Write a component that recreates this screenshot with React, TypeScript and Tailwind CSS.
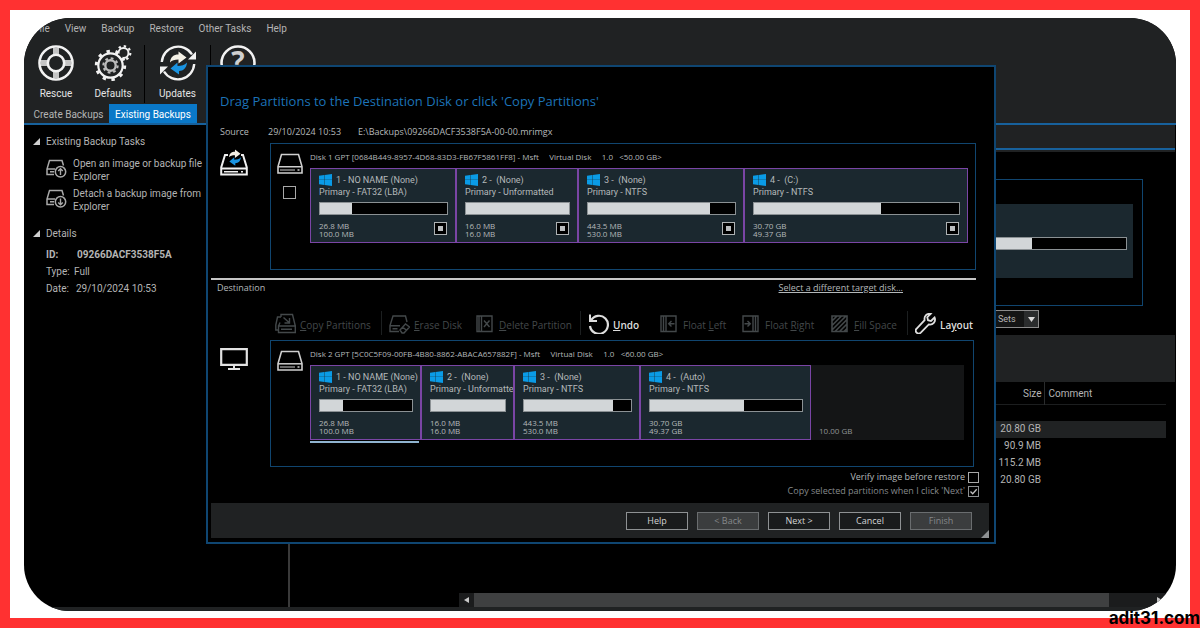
import type { ReactNode } from 'react';
import { clsx } from 'clsx';

type Partition = {
  title: string;
  kind: string;
  used: string;
  total: string;
  fill: number;
};

const sourceParts: Partition[] = [
  { title: '1 - NO NAME (None)', kind: 'Primary - FAT32 (LBA)', used: '26.8 MB', total: '100.0 MB', fill: 25 },
  { title: '2 -  (None)', kind: 'Primary - Unformatted', used: '16.0 MB', total: '16.0 MB', fill: 100 },
  { title: '3 -  (None)', kind: 'Primary - NTFS', used: '443.5 MB', total: '530.0 MB', fill: 83 },
  { title: '4 -  (C:)', kind: 'Primary - NTFS', used: '30.70 GB', total: '49.37 GB', fill: 62 },
];

const targetParts: Partition[] = [
  ...sourceParts.slice(0, 3),
  { ...sourceParts[3], title: '4 -  (Auto)' },
];

const rows = ['20.80 GB', '90.9 MB', '115.2 MB', '20.80 GB'];

/* ---------- icons ---------- */

function RescueIcon() {
  return (
    <svg viewBox="0 0 36 36" className="size-9" fill="none" aria-hidden="true">
      <path d="M18 3v8M18 25v8M3 18h8M25 18h8" stroke="#c4c4c4" strokeWidth="6" />
      <circle cx="18" cy="18" r="16.5" stroke="#f2f2f2" strokeWidth="2.6" />
      <circle cx="18" cy="18" r="8.2" stroke="#f2f2f2" strokeWidth="2.6" />
    </svg>
  );
}

function DefaultsIcon() {
  return (
    <svg viewBox="0 0 38 36" className="h-9 w-[38px]" fill="none" aria-hidden="true">
      <circle cx="29.500" cy="8" r="6.800" stroke="#f2f2f2" strokeWidth="2.200" strokeDasharray="2.400 2.940" />
      <circle cx="29.500" cy="8" r="5" stroke="#f2f2f2" strokeWidth="2" />
      <circle cx="16.500" cy="20.500" r="15" fill="#202223" />
      <circle cx="16.500" cy="20.500" r="14.200" stroke="#f2f2f2" strokeWidth="3" strokeDasharray="3.400 5.520" />
      <circle cx="16.500" cy="20.500" r="12.200" stroke="#f2f2f2" strokeWidth="2.200" />
      <circle cx="16.500" cy="20.500" r="7.200" stroke="#bdbdbd" strokeWidth="2" strokeDasharray="2.800 2.850" />
      <circle cx="16.500" cy="20.500" r="5.200" stroke="#bdbdbd" strokeWidth="2.400" />
    </svg>
  );
}

function SwapArrows() {
  return (
    <>
      <path d="M10 17.500C10.500 12 13.500 9.500 18.500 9.500V6.500l8 6-8 6v-4c-4 0-6.500.8-8.500 3z" fill="#f5f1e6" />
      <path d="M27 17.500c-.5 5.500-3.500 8.500-8 8.500v3.500l-8.500-6 7-6V21c4 0 7-.8 9.500-3.500z" fill="#1a93e0" />
    </>
  );
}

function UpdatesIcon() {
  return (
    <svg viewBox="0 0 36 36" className="size-9" fill="none" aria-hidden="true">
      <path d="M1.800 17A16.300 16.300 0 0 1 32 9.500M34.200 19A16.300 16.300 0 0 1 4 26.500" stroke="#f2f2f2" strokeWidth="2.400" />
      <path d="M36 6.500v8h-8z" fill="#f2f2f2" />
      <path d="M0 29.500v-8h8z" fill="#f2f2f2" />
      <SwapArrows />
    </svg>
  );
}

function HelpIcon() {
  return (
    <svg viewBox="0 0 36 36" className="size-9" aria-hidden="true">
      <circle cx="18" cy="18" r="16.500" fill="none" stroke="#f2f2f2" strokeWidth="2.600" />
      <text x="18" y="27" textAnchor="middle" fontSize="28" fontWeight="700" fontFamily="Open Sans, sans-serif" fill="#cfcfcf">?</text>
    </svg>
  );
}

function DriveIcon({ badge }: { badge: 'up' | 'down' }) {
  return (
    <svg viewBox="0 0 21 19" className="h-[19px] w-[21px]" fill="none" stroke="#a9a9a9" strokeWidth="1.500" aria-hidden="true">
      <path d="M17.500 6.500 16 1.500H3.500L1 10v5.500h7M1 10h8" />
      <path d="M4 12.700h4" />
      <circle cx="14.500" cy="12.800" r="5.200" />
      <path d={badge === 'up' ? 'M14.500 16v-6M12.200 12l2.300-2.300 2.300 2.300' : 'M14.500 9.600v6M12.200 13.500l2.300 2.300 2.300-2.300'} strokeWidth="1.400" />
    </svg>
  );
}

function DiskIcon() {
  return (
    <svg viewBox="0 0 26 21" className="h-[21px] w-[26px]" fill="none" stroke="#cfcfcf" aria-hidden="true">
      <path d="M4.500 1.500h17L25 13.500v6.500H1v-6.500z" strokeWidth="1.600" />
      <path d="M1 13.800h24" strokeWidth="1.500" />
      <path d="M3 17h15" strokeWidth="1" />
      <path d="M20.500 17h2" strokeWidth="1.500" />
    </svg>
  );
}

function RestoreDiskIcon() {
  return (
    <svg viewBox="0 0 28 27" className="h-[27px] w-7" fill="none" aria-hidden="true">
      <path d="M8 6H5L1.200 18.500v7h25.600v-7L23 6h-2" stroke="#f0f0f0" strokeWidth="2" />
      <path d="M1 19.500h26" stroke="#f0f0f0" strokeWidth="2" />
      <path d="M4 22.700h14M21 22.700h2" stroke="#f0f0f0" strokeWidth="1.400" />
      <g transform="translate(2 -4) scale(0.700)">
        <SwapArrows />
      </g>
    </svg>
  );
}

function MonitorIcon() {
  return (
    <svg viewBox="0 0 28 22" className="h-[22px] w-7" fill="none" stroke="#e2e2e2" aria-hidden="true">
      <path d="M1.200 1.200h25.600v15.600H1.200z" strokeWidth="2.200" />
      <path d="M14 17v3M8 21h12" strokeWidth="2" />
    </svg>
  );
}

function WindowsLogo() {
  return (
    <svg viewBox="0 0 13 12" className="h-3 w-[13px] shrink-0" fill="#0a9be6" aria-hidden="true">
      <path d="M0 1.700 5.300 1v4.700H0zM5.700.9 13 0v5.700H5.700zM0 6.100h5.300V11L0 10.300zM5.700 6.100H13V12l-7.300-.9z" />
    </svg>
  );
}

const toolIcons: Record<string, ReactNode> = {
  copy: (
    <>
      <path d="M6 4V1.500h11.500L20.300 13M3.500 13h16.800v6.500H3.500zM3.500 13 5 9.500" />
      <path d="M6 16.300h11M3.500 17H.8v-5L2.500 4H6M8.500 4.500l5.500 5M14.500 5v5H9.500" />
    </>
  ),
  erase: (
    <>
      <path d="M18 9 16.500 3H4L1 12.500v6h9M1 12.800h10M3.500 15.700h5" />
      <path d="m11 17 5.500-6 4 3-5.500 6h-2zM13.500 14l4 3.200" />
    </>
  ),
  remove: <path d="M3 3h15v15.500H3zM7.500 3v15.500M5 3v15.500M10 7.500l5.500 6.500M15.500 7.500 10 14" />,
  undo: (
    <>
      <path d="M3 7.500A9 9 0 1 1 2 13" strokeWidth="2.200" />
      <path d="M2 1.500V8h7" strokeWidth="2" />
    </>
  ),
  left: <path d="M3 3h15v15.500H3zM8 3v15.500M5.500 3v15.500M16.500 10.800H11M13.500 8l-2.800 2.800 2.800 2.800" />,
  right: <path d="M3 3h15v15.500H3zM13 3v15.500M15.500 3v15.500M4.500 10.800H10M7.500 8l2.800 2.800L7.500 13.600" />,
  fill: <path d="M3 3h15v15.500H3zM3 8l5-5M3 12.500 12.500 3M3 17 17 3M6 18.500 18 6.500M10.500 18.500 18 11M15 18.500l3-3" strokeWidth="1.600" />,
  layout: (
    <path
      d="M19.600 4.500 16 8l-3-.8-.7-3L15.700.9C12 .2 8.800 3 9.600 7.200L1.700 15.500a2.900 2.900 0 0 0 4.100 4.200l8-8.300c4 .8 7.400-2.600 5.800-6.900z"
      strokeWidth="1.800"
    />
  ),
};

type ToolProps = { icon: string; before: string; hot: string; after: string; width: string; enabled?: boolean };

function Tool({ icon, before, hot, after, width, enabled }: ToolProps) {
  return (
    <button
      type="button"
      disabled={!enabled}
      className={clsx(
        'flex h-6 items-center gap-1 whitespace-nowrap text-left',
        width,
        enabled ? 'font-semibold text-[#dedede]' : 'text-[#43484a]',
      )}
    >
      <svg viewBox="0 0 21 21" className="size-[21px] shrink-0" fill="none" stroke="currentColor" strokeWidth="1.400" aria-hidden="true">
        {toolIcons[icon]}
      </svg>
      <span className="pt-1">
        {before}
        <span className="underline">{hot}</span>
        {after}
      </span>
    </button>
  );
}

function ToolSeparator() {
  return <span className="mr-[7px] h-6 w-px bg-[#1c1f20]" />;
}

/* ---------- dialog pieces ---------- */

function PartitionBox({ part, stoppable }: { part: Partition; stoppable?: boolean }) {
  return (
    <div className="flex min-w-0 flex-col overflow-hidden border border-[#7a45a5] bg-[#1b282f] pt-[5px] pr-[7px] pb-1 pl-2 font-['Roboto',sans-serif]">
      <div className="flex h-3 items-center gap-1 whitespace-pre">
        <WindowsLogo />
        <span>{part.title}</span>
      </div>
      <div className="whitespace-nowrap">{part.kind}</div>
      <div className="mt-1 h-[13px] border border-[#8b9194] bg-black">
        <div className="h-full bg-[#d2d6d8]" style={{ width: `${part.fill}%` }} />
      </div>
      <div className="mt-[7px] flex items-start justify-between pr-px font-['Open_Sans',sans-serif] text-[8px] leading-2">
        <div>
          <div>{part.used}</div>
          <div>{part.total}</div>
        </div>
        {stoppable && (
          <button type="button" aria-label="Partition options" className="flex size-[13px] items-center justify-center border border-[#aeb2b4] bg-black">
            <span className="size-[5px] bg-[#b9bcbe]" />
          </button>
        )}
      </div>
    </div>
  );
}

function DiskPanel({ label, check, children }: { label: ReactNode; check?: boolean; children: ReactNode }) {
  return (
    <div className="flex min-w-0 flex-1 border border-[#10456f] pt-[7px] pr-[7px] pb-[26px] pl-1.5 text-[9px] leading-3 text-[#b4b8ba]">
      <div className="flex w-[33px] shrink-0 flex-col">
        <span className="mt-0.5"><DiskIcon /></span>
        {check && (
          <input type="checkbox" aria-label="Select disk" className="mt-3 ml-1.5 size-[13px] appearance-none border border-[#a8a8a8] bg-black" />
        )}
      </div>
      <div className="min-w-0 flex-1">
        <div className="whitespace-pre text-[8px]">{label}</div>
        {children}
      </div>
    </div>
  );
}

function DialogButton({ children, disabled }: { children: ReactNode; disabled?: boolean }) {
  return (
    <button
      type="button"
      disabled={disabled}
      className={clsx(
        'h-[18px] w-[62px] border text-[9px] leading-4',
        disabled ? 'border-[#6a6d6f] bg-[#3b3d3e] text-[#85888a]' : 'border-[#8e9193] bg-[#191b1c] text-[#d4d4d4]',
      )}
    >
      {children}
    </button>
  );
}

function RestoreDialog() {
  return (
    <div
      role="dialog"
      aria-labelledby="dialog-title"
      className="absolute top-[47px] right-[180px] left-[182px] border-2 border-[#0f4672] bg-black px-[3px] pb-1 text-[9px] leading-3 text-[#b4b8ba]"
    >
      <h1 id="dialog-title" className="pt-6 pl-[9px] text-[13px] leading-5 text-[#1c73b8]">
        Drag Partitions to the Destination Disk or click 'Copy Partitions'
      </h1>
      <div className="mt-[13px] flex h-4 items-center pl-[9px]">
        <span className="w-12">Source</span>
        <span className="w-[90px]">29/10/2024 10:53</span>
        <span>E:\Backups\09266DACF3538F5A-00-00.mrimgx</span>
      </div>
      <div className="mt-[3px] flex pr-[15px] pl-[9px]">
        <div className="w-[50px] shrink-0 pt-1.5"><RestoreDiskIcon /></div>
        <DiskPanel check label="Disk 1 GPT [0684B449-8957-4D68-83D3-FB67F5861FF8] - Msft     Virtual Disk     1.0   <50.00 GB>">
          <div className="mt-[5px] grid grid-cols-[146fr_122fr_166fr_224fr]">
            {sourceParts.map((part) => (
              <PartitionBox key={part.title} part={part} stoppable />
            ))}
          </div>
        </DiskPanel>
      </div>

      <div className="mt-2 mr-[15px] h-0.5 bg-[#c6c6c6]" />
      <div className="mt-0.5 flex justify-between pr-[88px] pl-1.5 text-[9px]">
        <span>Destination</span>
        <a href="#target" className="underline">Select a different target disk...</a>
      </div>

      <div className="mt-[17px] flex h-6 items-center pl-16 text-[10px]">
        <Tool icon="copy" before="" hot="C" after="opy Partitions" width="w-[106px]" />
        <ToolSeparator />
        <Tool icon="erase" before="" hot="E" after="rase Disk" width="w-[85px]" />
        <Tool icon="remove" before="" hot="D" after="elete Partition" width="w-[106px]" />
        <ToolSeparator />
        <Tool icon="undo" before="" hot="U" after="ndo" width="w-[70px]" enabled />
        <Tool icon="left" before="Float " hot="L" after="eft" width="w-[82px]" />
        <Tool icon="right" before="Float " hot="R" after="ight" width="w-[89px]" />
        <Tool icon="fill" before="" hot="F" after="ill Space" width="w-[78px]" />
        <ToolSeparator />
        <Tool icon="layout" before="La" hot="y" after="out" width="w-[60px]" enabled />
      </div>

      <div className="mt-[5px] flex pr-[17px] pl-[9px]">
        <div className="w-[50px] shrink-0 pt-2"><MonitorIcon /></div>
        <DiskPanel label="Disk 2 GPT [5C0C5F09-00FB-4B80-8862-ABACA657882F] - Msft     Virtual Disk     1.0   <60.00 GB>">
          <div className="relative mt-[5px] mr-0.5 grid grid-cols-[111fr_93fr_126fr_171fr_153fr]">
            {targetParts.map((part) => (
              <PartitionBox key={part.title} part={part} />
            ))}
            <div className="flex items-end bg-[#141516] px-2 pb-[5px] text-[8px] leading-2 text-[#8f9395]">10.00 GB</div>
            <span className="absolute top-full left-0 mt-px h-0.5 w-[109px] bg-[#8fb3cf]" />
          </div>
        </DiskPanel>
      </div>

      <div className="mt-[3px] flex flex-col items-end pr-3">
        <label className="flex h-3.5 items-center gap-[3px]">
          Verify image before restore
          <input type="checkbox" className="size-[11px] appearance-none border border-[#a8a8a8]" />
        </label>
        <label className="flex h-3.5 items-center gap-[3px] text-[#85898b]">
          Copy selected partitions when I click 'Next'
          <span className="grid">
            <input type="checkbox" defaultChecked className="col-start-1 row-start-1 size-[11px] appearance-none border border-[#8d9092]" />
            <svg viewBox="0 0 11 11" className="pointer-events-none col-start-1 row-start-1 size-[11px]" fill="none" stroke="#c0c0c0" strokeWidth="1.300" aria-hidden="true">
              <path d="m2.500 5.500 2.200 2.300 4-4.500" />
            </svg>
          </span>
        </label>
      </div>

      <div className="mt-[5px] mr-0.5 flex h-[35px] items-center justify-end gap-[9px] bg-[#202223]">
        <DialogButton>Help</DialogButton>
        <DialogButton disabled>&lt; Back</DialogButton>
        <DialogButton>Next &gt;</DialogButton>
        <DialogButton>Cancel</DialogButton>
        <DialogButton disabled>Finish</DialogButton>
        <svg viewBox="0 0 8 8" className="size-2 self-end" fill="#8e9193" aria-hidden="true">
          <path d="M8 0v8H0z" />
        </svg>
      </div>
    </div>
  );
}

/* ---------- main window ---------- */

function RibbonButton({ icon, label, width }: { icon: ReactNode; label?: string; width: string }) {
  return (
    <button type="button" aria-label={label ?? 'Help'} className={clsx('flex flex-col items-center gap-[5px] text-[#e4e4e4]', width)}>
      {icon}
      {label && <span className="h-4 leading-4">{label}</span>}
    </button>
  );
}

function Disclosure({ children }: { children: ReactNode }) {
  return (
    <h2 className="flex h-4 items-center gap-1.5 pl-[9px]">
      <svg viewBox="0 0 7 7" className="size-[7px]" fill="#cfcfcf" aria-hidden="true">
        <path d="M7 0v7H0z" />
      </svg>
      {children}
    </h2>
  );
}

function Sidebar() {
  return (
    <aside className="w-[264px] shrink-0 pt-2 text-[10px] leading-[13px] text-[#b4b4b4]">
      <Disclosure>Existing Backup Tasks</Disclosure>
      <a href="#open" className="mt-2 flex gap-1.5 pl-[22px]">
        <span className="pt-0.5"><DriveIcon badge="up" /></span>
        <span>Open an image or backup file<br />Explorer</span>
      </a>
      <a href="#detach" className="mt-1 flex gap-1.5 pl-[22px]">
        <span className="pt-0.5"><DriveIcon badge="down" /></span>
        <span>Detach a backup image from<br />Explorer</span>
      </a>
      <div className="mt-3"><Disclosure>Details</Disclosure></div>
      <div className="mt-[5px] pl-[22px] leading-[17px]">
        <p className="flex font-bold"><span className="w-[31px]">ID:</span>09266DACF3538F5A</p>
        <p className="flex"><span className="w-7">Type:</span>Full</p>
        <p className="flex"><span className="w-[30px]">Date:</span>29/10/2024 10:53</p>
      </div>
    </aside>
  );
}

function BackupList() {
  return (
    <main className="flex min-w-0 flex-1 flex-col border-l-2 border-[#3a3a3a] text-[10px] text-[#b4b4b4]">
      <div className="mr-px h-[27px] border-b-2 border-[#202223] bg-[#202223]">
        <div className="h-full border-b-2 border-[#17619c]" />
      </div>
      <div className="mt-[27px] mr-[33px] border border-[#10456f] pt-6 pr-[9px] pb-[27px] pl-10">
        <div className="bg-[#1b282f] pt-[33px] pr-1.5 pb-7 pl-2">
          <div className="h-[13px] border border-[#8b9194] bg-black">
            <div className="h-full w-[88%] bg-[#d2d6d8]" />
          </div>
        </div>
      </div>
      <div className="mt-1 mr-[137px] flex justify-end">
        <div className="grid w-[46px] border border-[#8b8b8b] bg-[#141515]">
          <select aria-label="Sets" className="col-start-1 row-start-1 h-4 appearance-none pl-1 text-[9px] leading-4">
            <option>Sets</option>
          </select>
          <span className="pointer-events-none col-start-1 row-start-1 flex w-3.5 items-center justify-center justify-self-end bg-[#2a2c2d]">
            <svg viewBox="0 0 7 5" className="h-[5px] w-[7px]" fill="#d8d8d8" aria-hidden="true">
              <path d="M0 0h7L3.500 5z" />
            </svg>
          </span>
        </div>
      </div>
      <div className="mt-[7px] mr-px h-[47px] bg-[#202223]" />
      <table className="mr-[10px]">
        <thead className="border-b border-[#1c1e1f]">
          <tr className="h-[22px]">
            <th scope="col" className="pt-0.5 pr-0.5 text-right font-normal">Size</th>
            <th scope="col" className="w-[122px] border-l border-[#2a2c2d] pt-0.5 pl-1 text-left font-normal">Comment</th>
          </tr>
        </thead>
        <tbody className="before:block before:h-4">
          {rows.map((size, i) => (
            <tr key={i} className={clsx('h-[17px]', i === 0 && 'bg-[#202223]')}>
              <td className="pr-[3px] text-right leading-4">{size}</td>
              <td />
            </tr>
          ))}
        </tbody>
      </table>
      <div className="mt-auto ml-[169px] flex h-3.5 items-center bg-[#1b1c1d]">
        <svg viewBox="0 0 5 6" className="mx-[5px] h-1.5 w-[5px]" fill="#c8c8c8" aria-hidden="true"><path d="M5 0v6L0 3z" /></svg>
        <div className="h-full flex-1 bg-[#3f4041]" />
        <svg viewBox="0 0 5 6" className="mr-3.5 ml-12 h-1.5 w-[5px]" fill="#c8c8c8" aria-hidden="true"><path d="M0 0v6l5-3z" /></svg>
      </div>
    </main>
  );
}

export default function App() {
  return (
    <div className="relative flex min-h-screen flex-col border-[10px] border-[#ff3131] bg-white px-3.5 pt-2 pb-[7px] font-['Open_Sans',sans-serif]">
      <div className="relative flex flex-1 flex-col overflow-hidden rounded-[46px] bg-black font-['Roboto',sans-serif]">
        <header className="bg-[#202223] text-[10px] text-[#b4b4b4]">
          <nav className="flex h-[21px] items-center gap-[15px] pl-2.5">
            {['File', 'View', 'Backup', 'Restore', 'Other Tasks', 'Help'].map((m) => (
              <a key={m} href={`#${m}`}>{m}</a>
            ))}
          </nav>
          <div className="flex h-[65px] pt-1.5">
            <RibbonButton icon={<RescueIcon />} label="Rescue" width="w-16" />
            <RibbonButton icon={<DefaultsIcon />} label="Defaults" width="w-[50px]" />
            <span className="ml-1.5 h-[58px] w-px bg-black" />
            <RibbonButton icon={<UpdatesIcon />} label="Updates" width="w-[65px]" />
            <span className="h-[58px] w-px bg-black" />
            <RibbonButton icon={<HelpIcon />} width="w-[54px]" />
          </div>
          <div role="tablist" className="flex h-[21px] items-stretch border-b-2 border-[#17619c] pl-1">
            <button type="button" role="tab" aria-selected="false" className="w-[81px] whitespace-nowrap pt-0.5">Create Backups</button>
            <button type="button" role="tab" aria-selected="true" className="w-[88px] whitespace-nowrap bg-[#0a78c8] pt-0.5 text-white">Existing Backups</button>
          </div>
        </header>
        <div className="flex flex-1">
          <Sidebar />
          <BackupList />
        </div>
        <div className="h-1 bg-[#202223]" />
        <div className="font-['Open_Sans',sans-serif]">
          <RestoreDialog />
        </div>
      </div>
      <span className="absolute -right-2.5 -bottom-2.5 font-['Inter',sans-serif] text-[17px] leading-5 font-bold text-black">adit31.com</span>
    </div>
  );
}
